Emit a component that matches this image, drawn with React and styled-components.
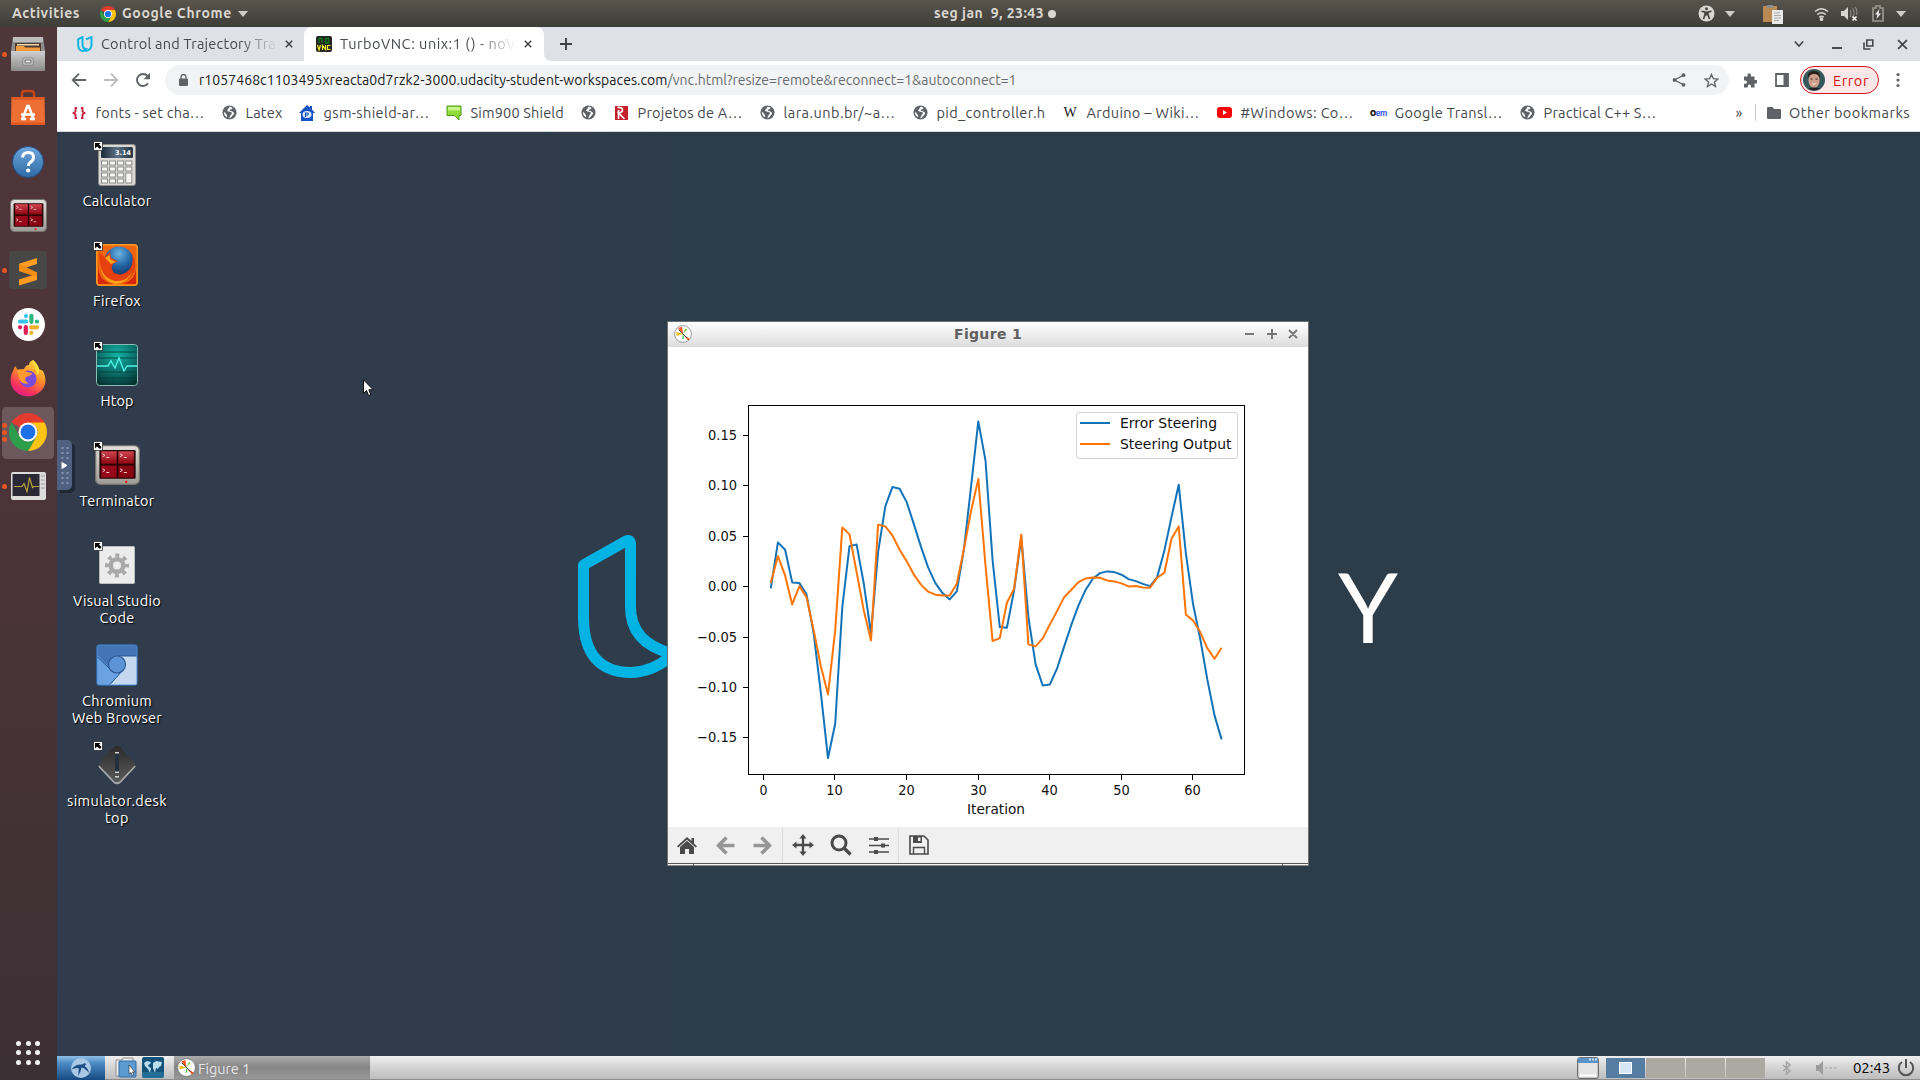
import React, { useLayoutEffect, useRef, useState } from "react";
import styled, { createGlobalStyle, css } from "styled-components";

const ui = `"Ubuntu", "Noto Sans", "Open Sans", sans-serif`;

const Global = createGlobalStyle`
  * { box-sizing: border-box; }
  html, body { margin: 0; padding: 0; background: #2d3b49; overflow: hidden; }
  body { font-family: ${ui}; }
  svg { display: block; flex: none; }
`;

/* ---------- text that keeps a fixed advance width ---------- */
const FitBox = styled.span`
  display: block;
  flex: none;
  white-space: pre;
  width: ${(p) => p.$w}px;
`;
function Fit({ w, children, className }) {
  const ref = useRef(null);
  const [spacing, setSpacing] = useState(0);
  useLayoutEffect(() => {
    const natural = ref.current.getBoundingClientRect().width;
    setSpacing((w - natural) / String(children).length);
  }, [w, children]);
  return (
    <FitBox $w={w} className={className}>
      <span ref={ref} style={{ letterSpacing: `${spacing}px` }}>{children}</span>
    </FitBox>
  );
}

/* ---------- frame ---------- */
const Screen = styled.div`
  width: 1920px;
  height: 1080px;
  display: grid;
  grid-template-rows: 27px 1fr;
  overflow: hidden;
`;
const Body = styled.div`
  display: grid;
  grid-template-columns: 57px 1fr;
  min-height: 0;
`;
const Spacer = styled.div`
  flex: ${(p) => (p.$w ? "none" : "1")};
  width: ${(p) => (p.$w ? p.$w + "px" : "auto")};
`;

/* ---------- gnome top bar ---------- */
const TopBar = styled.header`
  display: grid;
  grid-template-columns: 934px 1fr auto;
  align-items: center;
  background: linear-gradient(#58544c, #3e3d38);
  color: #dfdbd2;
`;
const TopGroup = styled.div`
  display: flex;
  align-items: center;
  height: 27px;
  padding-left: ${(p) => p.$pl || 0}px;
  gap: ${(p) => p.$gap || 0}px;
`;
const TopText = styled(Fit)`
  font-size: 14px;
  font-weight: 700;
  line-height: 27px;
  height: 27px;
  color: #d9d6cf;
`;
const Caret = styled.i`
  border: 5px solid transparent;
  border-top: 6px solid #cfccc5;
  border-bottom: 0;
  flex: none;
`;
const TopDot = styled.i`
  width: 8px;
  height: 8px;
  border-radius: 50%;
  background: #dad7d0;
  margin-left: 4px;
`;

/* ---------- dock ---------- */
const Dock = styled.nav`
  display: flex;
  flex-direction: column;
  justify-content: space-between;
  background: linear-gradient(#4f3639, #4b3439 50%, #3b3034);
`;
const DockItem = styled.div`
  display: grid;
  grid-template-columns: 8px 40px;
  align-items: center;
  justify-items: center;
  height: 54.1px;
  background: ${(p) => (p.$active ? "rgba(255,255,255,.18)" : "none")};
  background-clip: padding-box;
  border: 1px solid transparent;
  border-width: 1px 3px 1px 2px;
  border-radius: 6px;
  margin: 0;
`;
const DockDots = styled.div`
  display: flex;
  flex-direction: column;
  gap: 2px;
  margin-left: -3px;
`;
const DockDot = styled.i`
  width: 5px;
  height: 5px;
  border-radius: 50%;
  background: #e95420;
`;
const DockIcon = styled.div`
  margin: -1px 0 0 -4px;
`;
const AppsGrid = styled.div`
  display: grid;
  grid-template-columns: repeat(3, 5px);
  gap: 4.5px;
  padding: 0 0 15.5px 16px;
`;
const AppsDot = styled.i`
  height: 5px;
  border-radius: 50%;
  background: #f4f2f2;
`;

/* ---------- browser ---------- */
const Browser = styled.main`
  display: grid;
  grid-template-rows: 34px 34px 37px 924px 24px;
  min-width: 0;
`;
const TabStrip = styled.div`
  display: flex;
  background: #dee1e6;
  align-items: center;
`;
const Tab = styled.div`
  display: flex;
  align-items: center;
  height: 34px;
  width: ${(p) => p.$w}px;
  padding-left: ${(p) => p.$pl}px;
  ${(p) =>
    p.$active &&
    css`
      background: #fff;
      border-radius: 8px 8px 0 0;
      box-shadow: 8px 17px 0 0 #fff;
      clip-path: path("M-8 34Q0 34 0 26V8Q0 0 8 0H232Q240 0 240 8V26Q240 34 248 34Z");
    `}
`;
const TabTitle = styled.div`
  width: 176px;
  margin: 0 5px 0 8px;
  font-size: 14.5px;
  line-height: 33px;
  padding-bottom: 2px;
  color: #45494d;
  -webkit-mask-image: linear-gradient(90deg, #000 ${(p) => p.$fade}px, transparent 176px);
`;
const Toolbar = styled.div`
  display: flex;
  align-items: center;
  background: #fff;
  padding: 4px 0 0 14px;
`;
const NavIcons = styled.div`
  display: flex;
  gap: 16px;
  margin-right: 14px;
`;
const Omnibox = styled.div`
  display: flex;
  align-items: center;
  width: 1564px;
  height: 30px;
  border-radius: 15px;
  background: #f1f3f4;
  padding: 0 10px;
`;
const UrlPart = styled(Fit)`
  font-size: 14px;
  line-height: 29px;
  color: ${(p) => p.$c};
`;
const UrlHost = styled(UrlPart)`
  color: #202124;
`;
const UrlPath = styled(UrlPart)`
  color: #686c70;
`;
const ErrorPill = styled.div`
  display: flex;
  align-items: center;
  gap: 8px;
  width: 79px;
  height: 28px;
  margin: 0 10px 0 9px;
  padding-left: 2px;
  border: 1px solid #d3161b;
  border-radius: 14px;
  background: #fce8e8;
`;
const ErrorText = styled(Fit)`
  font-size: 14.5px;
  line-height: 25px;
  color: #d20f0f;
`;
const Bookmarks = styled.div`
  display: flex;
  align-items: center;
  gap: 16.5px;
  padding: 0 0 1px 14px;
  background: #fff;
  border-bottom: 1px solid #d5dcdd;
`;
const Bookmark = styled.div`
  display: flex;
  align-items: center;
  gap: 8.5px;
`;
const BookText = styled(Fit)`
  font-size: 14.5px;
  line-height: 34px;
  color: #44484c;
`;
const BookIcon = styled.div`
  width: 16px;
  height: 16px;
  display: grid;
  place-items: center;
  flex: none;
`;
const WGlyph = styled.span`
  font: 400 14px "Liberation Serif", serif;
  color: #202020;
`;
const Oem = styled.span`
  font: 700 8px Inter, sans-serif;
  letter-spacing: -0.5px;
  color: #3b5bff;
  & b { color: #111; }
`;
const Divider = styled.i`
  width: 1px;
  height: 17px;
  background: #c9ccd0;
  margin: 0 2px;
`;

/* ---------- remote desktop ---------- */
const Desktop = styled.section`
  position: relative;
  overflow: hidden;
  background: linear-gradient(90deg, #303c4c 0, #303c4c 480px, #2d3c49 640px, #2c3c49 100%);
`;
const IconColumn = styled.div`
  display: grid;
  grid-auto-rows: 100px;
  width: 120px;
  height: 100%;
`;
const DeskItem = styled.div`
  display: flex;
  flex-direction: column;
  align-items: center;
  padding-top: 10px;
`;
const DeskIcon = styled.div`
  position: relative;
  width: 46px;
  height: 46px;
  display: grid;
  place-items: center;
  margin-bottom: 4px;
`;
const Shortcut = styled.div`
  position: absolute;
  left: -1px;
  top: -1px;
`;
const DeskLabel = styled(Fit)`
  font-size: 14.5px;
  line-height: 17px;
  color: #fff;
  text-shadow: 1px 1px 1px #000;
`;
const Handle = styled.div`
  position: absolute;
  left: 0;
  top: 308px;
  width: 15px;
  height: 50px;
  border-radius: 0 5px 5px 0;
  background: #4f6080;
  box-shadow: 3px 3px 0 #1f2833;
`;
const Logo = styled.div`
  position: absolute;
  left: 515px;
  top: 396px;
`;
const LogoLetter = styled.div`
  position: absolute;
  left: 1281px;
  top: 415px;
  font: 400 96px/117px Lato, sans-serif;
  color: #fff;
`;
const Pointer = styled.div`
  position: absolute;
  left: 306px;
  top: 247px;
`;

/* ---------- figure window ---------- */
const Figure = styled.div`
  position: absolute;
  left: 610px;
  top: 189px;
  width: 642px;
  height: 545px;
  border: 1px solid #6c6f73;
  border-bottom-color: #8a8a8a;
  background: #fff;
  display: grid;
  grid-template-rows: 25px 480px 36px 2px;
`;
const FigTitle = styled.div`
  display: flex;
  align-items: center;
  justify-content: space-between;
  background: linear-gradient(#fff, #dcdcdc);
  padding: 0 8px 1px 6px;
`;
const FigName = styled(Fit)`
  font: 700 14px "DejaVu Sans", sans-serif;
  color: #606060;
  margin: 0 0 1px 40px;
`;
const FigTools = styled.div`
  display: flex;
  align-items: center;
  background: #f0f0f0;
`;
const Tool = styled.div`
  display: grid;
  place-items: center;
  width: ${(p) => p.$w || 38}px;
  height: 37px;
`;
const ToolSep = styled.i`
  width: 1px;
  height: 36px;
  background: #dcdcdc;
`;
const FigGrip = styled.div`
  display: flex;
  justify-content: space-between;
  border-top: 1px solid #555;
  padding: 0 25px;
  background: #f5f5f5;
`;
const GripMark = styled.i`
  width: 1px;
  height: 2px;
  background: #555;
`;

/* ---------- remote taskbar ---------- */
const Taskbar = styled.footer`
  display: flex;
  align-items: center;
  background: linear-gradient(#efefef, #d6d6d6 45%, #bdbdbd);
  border-bottom: 1px solid #8c8c8c;
`;
const StartButton = styled.div`
  width: 48px;
  height: 24px;
  display: grid;
  place-items: center;
  background: linear-gradient(#8fbfe8, #4c8ac4 30%, #164a82);
  margin-right: 10px;
`;
const TaskButton = styled.div`
  display: flex;
  align-items: center;
  gap: 2px;
  width: 196px;
  height: 23px;
  margin-left: 10px;
  padding-left: 3px;
  background: linear-gradient(#aaa, #868686 50%, #979797);
`;
const TaskText = styled(Fit)`
  font-size: 14.5px;
  line-height: 22px;
  padding-top: 2px;
  color: #e6e6e6;
`;
const Pager = styled.div`
  display: grid;
  grid-template-columns: repeat(4, 39px);
  gap: 1px;
  margin: 0 13px 0 7px;
`;
const Workspace = styled.div`
  height: 20px;
  display: grid;
  place-items: center;
  background: ${(p) => (p.$on ? "#557ca1" : "#aca8a2")};
`;
const MiniWindow = styled.i`
  width: 13px;
  height: 12px;
  background: #d6e6f5;
  border: 1px solid #fff;
`;
const ClockText = styled(Fit)`
  font-size: 15px;
  line-height: 23px;
  color: #000;
`;

/* ---------- drawings ---------- */
const ChromeLogo = ({ s }) => (
  <svg width={s} height={s} viewBox="0 0 40 40">
    <path d="M20 20L2.7 10A20 20 0 0 1 37.3 10L37.3 10.500Z" fill="#e33b2e" />
    <path d="M37.300 10A20 20 0 0 1 20 40L28.700 25A10 10 0 0 0 20 10Z" fill="#fdc413" />
    <path d="M20 40A20 20 0 0 1 2.700 10L11.300 25A10 10 0 0 0 28.700 25Z" fill="#2d9e4b" />
    <circle cx="20" cy="20" r="10" fill="#fff" />
    <circle cx="20" cy="20" r="7.8" fill="#1c71e8" />
  </svg>
);
const Globe = () => (
  <svg width="15" height="15" viewBox="0 0 16 16">
    <circle cx="8" cy="8" r="7.500" fill="#5f6368" />
    <path d="M8 1.800c-1 1-.4 1.900-1.800 2.700-1.400.9-.6 2 .7 2.300 1.800.3 3.400.4 3.600 1.700.2 1.200-1.100 1.500-1.600 2.700-.4.900-.5 2-1.300 3 1.600-.1 2.200-1.400 3-2.300 1-1.100 2.200-1.800 2.300-3.100-.6-1.600-2-1.900-3.500-2.300-1-.3-1.600-1-.5-1.700 1.200-.5 2.200-.7 2.300-1.700C10.200 2.200 9.100 1.900 8 1.800zM2 7.500c0 2.600 1.200 4.500 3.300 5.600.4-1.200.1-2-.5-2.900C4 9.200 3.600 8 2 7.500z" fill="#fff" />
  </svg>
);
const MplIcon = ({ s }) => (
  <svg width={s} height={s} viewBox="0 0 18 18">
    <circle cx="9" cy="9" r="8.400" fill="#fff" stroke="#777" strokeWidth=".7" />
    <path d="M9 9.500L4.200 3 8 1.800z" fill="#f2541b" />
    <path d="M9 9L2.600 11 2.300 7z" fill="#eebb12" />
    <path d="M9 9L13 4.600 11.200 3.600z" fill="#79d14a" />
    <path d="M8.500 9L15.800 14 14.300 15.600z" fill="#e8501d" />
    <path d="M9 9L8 14 10 13.500z" fill="#3fbf5a" />
    <path d="M4.500 4.500L13 13" stroke="#444" strokeWidth=".9" />
  </svg>
);
const Terminator = ({ w, h }) => (
  <svg width={w} height={h} viewBox="0 0 36 32" preserveAspectRatio="none">
    <defs>
      <linearGradient id="tm" x1="0" y1="0" x2="0" y2="1"><stop offset="0" stopColor="#e2e0da" /><stop offset="1" stopColor="#9d9b95" /></linearGradient>
      <linearGradient id="tr" x1="0" y1="0" x2="0" y2="1"><stop offset="0" stopColor="#d04550" /><stop offset="1" stopColor="#8c0612" /></linearGradient>
    </defs>
    <rect x=".5" y=".5" width="35" height="31" rx="4" fill="url(#tm)" stroke="#77756f" />
    <rect x="3.500" y="4" width="29" height="23" rx="1" fill="#2a0505" />
    <path d="M5 5h12.300v10H5z" fill="url(#tr)" /><path d="M18.700 5H31v10H18.700z" fill="url(#tr)" />
    <path d="M5 16.500h12.300V26H5z" fill="#98081a" /><path d="M18.700 16.500H31V26H18.700z" fill="#870612" />
    <path d="M6 7l2 1.200L6 9.500m3 .5h2.500M20 7l2 1.200-2 1.300m3 .5h2.500M6 19l2 1.200-2 1.300m3 .5h2.500M20 19l2 1.200-2 1.300m3 .5h2.500" fill="none" stroke="#f0c8cc" strokeWidth=".8" />
    <circle cx="25" cy="29.300" r="1" fill="#f21818" />
  </svg>
);
const FilesIcon = () => (
  <svg width="36" height="36" viewBox="0 0 36 36">
    <defs><linearGradient id="fi" x1="0" y1="0" x2="0" y2="1"><stop offset="0" stopColor="#cfcfcf" /><stop offset="1" stopColor="#8b8b8b" /></linearGradient></defs>
    <path d="M3 1h30l2 14v19H1V15z" fill="#8f8f8f" /><path d="M3 1h30v5H3z" fill="#bdbdbd" />
    <path d="M5 7h26v8H5z" fill="#4b3a2e" /><path d="M7 8h22v1.500H7z" fill="#f3d7b0" /><path d="M6 10h8l1 1.500h15V15H6z" fill="#f09a3e" />
    <path d="M1 15h34v19a1 1 0 0 1-1 1H2a1 1 0 0 1-1-1z" fill="url(#fi)" />
    <rect x="13" y="22" width="10" height="7" rx="1" fill="#eee" stroke="#7d7d7d" /><rect x="15" y="24" width="6" height="3" fill="none" stroke="#555" />
  </svg>
);
const SoftwareIcon = () => (
  <svg width="36" height="37" viewBox="0 0 36 37">
    <path d="M12 11V5q0-3 3-3h6q3 0 3 3v6" fill="none" stroke="#c4441a" strokeWidth="2.500" />
    <path d="M1.500 8h33l.5 28H1z" fill="#ee6f33" /><path d="M1.500 8h33v3h-33z" fill="#d95a22" /><path d="M1 33.500h34V36H1z" fill="#de5b24" />
    <path d="M12.500 30l4.800-13h1.400l4.800 13M11 30h5M20 30h5M11 25.500h14" fill="none" stroke="#fff" strokeWidth="2.600" />
  </svg>
);
const HelpIcon = () => (
  <svg width="34" height="34" viewBox="0 0 34 34">
    <defs><linearGradient id="hp" x1="0" y1="0" x2="0" y2="1"><stop offset="0" stopColor="#6ea7dc" /><stop offset="1" stopColor="#2f6aa6" /></linearGradient></defs>
    <circle cx="17" cy="17" r="15.500" fill="url(#hp)" stroke="#1f4f85" />
    <path d="M11.500 12.500q.5-5 5.700-5 5.300 0 5.300 4.700 0 2.800-2.800 4.800-2.400 1.600-2.400 4" fill="none" stroke="#fff" strokeWidth="3" />
    <circle cx="17.200" cy="25.500" r="2.100" fill="#fff" />
  </svg>
);
const SublimeIcon = () => (
  <svg width="38" height="38" viewBox="0 0 38 38">
    <rect width="38" height="38" rx="3" fill="#474747" />
    <path d="M28 7L10 12.700V20l14 4-14 4.500v6L28 29v-7.500L14 17.500l14-4.400z" fill="#ff9b20" />
    <path d="M10 12.700V20l18 6v-4.500z" fill="#f28f12" />
  </svg>
);
const SlackIcon = () => (
  <svg width="33" height="33" viewBox="0 0 33 33">
    <circle cx="16.500" cy="16.500" r="16.500" fill="#fff" />
    <g strokeWidth="4.200" strokeLinecap="round">
      <path d="M8 13.500h6.200M14 8v.1" stroke="#36c5f0" />
      <path d="M19.400 7.800v6M25 13.600h-.1" stroke="#2eb67d" />
      <path d="M25 19.300h-6M19.300 24.900v-.1" stroke="#ecb22e" />
      <path d="M13.800 25v-6M8 19.300h.1" stroke="#e01e5a" />
    </g>
  </svg>
);
const FirefoxIcon = () => (
  <svg width="38" height="38" viewBox="0 0 38 38">
    <defs>
      <linearGradient id="ff" x1=".8" y1="0" x2=".3" y2="1"><stop offset="0" stopColor="#ffe23b" /><stop offset=".45" stopColor="#ff8a2a" /><stop offset=".8" stopColor="#f5315f" /><stop offset="1" stopColor="#e01f8b" /></linearGradient>
    </defs>
    <path d="M24 1c3 3 5 5 6 9l4 2c4 8 3 15-2 20-7 7-18 7-25 1C1 28 0 19 4 12L6 7l3 4 6-1c1-2 2-4 5-4 0-2 1-4 4-5z" fill="url(#ff)" />
    <circle cx="19" cy="20" r="8.500" fill="#7b4bdc" />
    <path d="M8 11c5-2 8 0 10 2l5 1c0 3-4 3-6 4-2 2 0 6 3 6-5 2-9-1-10-5z" fill="#ff9a2e" />
    <path d="M24 1c-1 5 4 8 4 15 3-2 2-5 2-6-1-4-3-6-6-9z" fill="#ffdf3a" />
  </svg>
);
const MonitorIcon = () => (
  <svg width="35" height="28" viewBox="0 0 35 28">
    <rect width="35" height="28" rx="2" fill="#dcdcdc" /><path d="M1.500 2h27v22h-27z" fill="#2b2836" />
    <path d="M3 14.500h8l2-3 3 8 2.500-14 3 10 1.500-1h5" fill="none" stroke="#b9a53a" strokeWidth="1.200" />
    <path d="M30.500 4h3M30.500 8h3M30.500 12h3M30.500 16h3" stroke="#8b8b8b" strokeDasharray="1 1" strokeWidth="1.500" />
  </svg>
);
const UdacityMark = () => (
  <svg width="16" height="16" viewBox="0 0 16 16" fill="none" stroke="#02b3e4" strokeWidth="1.900">
    <path d="M1.200 3.300L5.500 1v7.500q0 4 3.500 4.500Q7 15 5.500 15 1.200 14 1.200 9z" />
    <path d="M9 3.300L14.500 1v8.500q-.5 5-6.500 5.500" />
  </svg>
);
const Close = ({ s = 8, c = "#3c4043", w = 1.8 }) => (
  <svg width={s} height={s} viewBox="0 0 10 10"><path d="M1 1l8 8M9 1L1 9" stroke={c} strokeWidth={w} /></svg>
);
const Calculator = () => (
  <svg width="38" height="42" viewBox="0 0 38 42">
    <defs><linearGradient id="lcd"><stop offset="0" stopColor="#1c2b3a" /><stop offset=".5" stopColor="#5c6f82" /><stop offset="1" stopColor="#22323f" /></linearGradient></defs>
    <rect x=".5" y=".5" width="37" height="41" rx="2.500" fill="#d9d8d5" stroke="#8f8e8b" />
    <rect x="3" y="3" width="32" height="11" rx="1.500" fill="url(#lcd)" />
    <text x="33" y="11" textAnchor="end" fontSize="6.500" fontWeight="700" fontFamily="DejaVu Sans, sans-serif" fill="#fff">3.14</text>
    {[0, 1, 2, 3].map((r) => [0, 1, 2, 3].map((c) => (r === 3 && c === 3) ? null : (
      <rect key={`${r}${c}`} x={3.500 + c * 8.100} y={17 + r * 6} width="6" height={r === 2 && c === 3 ? 10 : 4} fill="#f7f7f6" stroke="#777" strokeWidth=".8" />
    )))}
  </svg>
);
const OldFirefox = () => (
  <svg width="42" height="42" viewBox="0 0 42 42">
    <defs><radialGradient id="gl" cx=".5" cy=".25" r=".8"><stop offset="0" stopColor="#6db4e2" /><stop offset=".5" stopColor="#2468a8" /><stop offset="1" stopColor="#14305e" /></radialGradient></defs>
    <rect x=".7" y=".7" width="40.600" height="40.600" rx="3" fill="#f0650f" stroke="#ff9a1c" strokeWidth="1.400" />
    <path d="M2 20Q2 38 18 40H2zM40 18q2 18-14 22h14z" fill="#d5280c" />
    <circle cx="23" cy="17" r="14.500" fill="url(#gl)" />
    <path d="M3 9l6 4 5-5 1 6 7 3-5 3q-3 4 1 9 8 4 15-3 5-6 3-16 6 10 1 20-7 10-19 8Q4 34 3 9z" fill="#e6400e" />
    <path d="M4 20q2 14 15 17 12 1 18-10-5 12-17 13Q6 38 4 20zM9 14l5-3v4l6 3-5 2z" fill="#fba41d" />
  </svg>
);
const Htop = () => (
  <svg width="42" height="42" viewBox="0 0 42 42">
    <defs><radialGradient id="ht" cx=".5" cy=".25" r=".8"><stop offset="0" stopColor="#12b3a4" /><stop offset=".6" stopColor="#0b6a66" /><stop offset="1" stopColor="#063532" /></radialGradient></defs>
    <rect x=".5" y=".5" width="41" height="41" rx="3" fill="url(#ht)" stroke="#86bdb4" />
    <path d="M1 8h40M1 14h40M1 28h40M1 34h40" stroke="#06403c" strokeWidth="1.500" opacity=".6" />
    <path d="M1 22h11l3-5 4 7 4-10 5 13 3-5h10" fill="none" stroke="#4ff3e6" strokeWidth="1.400" />
  </svg>
);
const GearFile = () => (
  <svg width="36" height="38" viewBox="0 0 36 38">
    <rect x=".5" y=".5" width="35" height="37" rx="1" fill="#ececec" stroke="#bdbdbd" />
    <circle cx="18" cy="19.500" r="6.300" fill="none" stroke="#a9a9a9" strokeWidth="4.600" />
    <circle cx="18" cy="19.500" r="10" fill="none" stroke="#a9a9a9" strokeWidth="4" strokeDasharray="3.900 3.954" strokeDashoffset="1.950" />
  </svg>
);
const Chromium = () => (
  <svg width="42" height="42" viewBox="0 0 42 42">
    <rect x=".7" y=".7" width="40.600" height="40.600" rx="2.500" fill="#5a96da" stroke="#2e69a8" />
    <path d="M1.500 1.500h39V12H21L13 23 1.500 11z" fill="#4474b4" />
    <path d="M21 12h19.500v28.500H14L27 26z" fill="#c3d8ee" /><path d="M1.500 13L13 24q6 6 14 2L14 40.500H1.500z" fill="#6aa2e2" />
    <path d="M1.500 13L14 25M27 26L14 40.500M21 12h19.500" fill="none" stroke="#2b5791" strokeWidth="1" />
    <circle cx="21" cy="20.500" r="8.500" fill="#5d94d8" stroke="#2b5791" strokeWidth="1.200" />
  </svg>
);
const Simulator = () => (
  <svg width="38" height="40" viewBox="0 0 38 40">
    <defs><linearGradient id="sm" x1="0" y1="0" x2="0" y2="1"><stop offset="0" stopColor="#2b2b2c" /><stop offset="1" stopColor="#5a5a5b" /></linearGradient></defs>
    <path d="M1 21L16 37q3 2.500 6 0L37 21" fill="none" stroke="#a9a9a9" strokeWidth="2" />
    <path d="M19 1q2 0 3 1l14 15q2 2 0 4L22 36q-3 2-6 0L2 21q-2-2 0-4L16 2q1-1 3-1z" fill="url(#sm)" />
    <path d="M17 7h4v21h-4z" fill="#233040" /><path d="M17 7h4v1.500h-4zM17 26.500h4V28h-4zM17 31h4v1.500h-4z" fill="#cfcfcf" />
  </svg>
);
const ShortcutArrow = () => (
  <svg width="10" height="10" viewBox="0 0 10 10"><path d="M.5.500h9v9h-9z" fill="#fff" stroke="#000" strokeWidth=".6" /><path d="M2 2h5.500L6 3.500 8.500 6 7 8 4 5.500 2 7.500z" fill="#000" /></svg>
);

/* ---------- data ---------- */
const ERROR_PX = [588, 542, 549.3, 582, 582.7, 594, 633, 693, 757.7, 723.3, 606.7, 545.7, 544, 583.3, 633, 551.7, 506, 486.7, 488.3, 501.7, 524, 546.7, 567.3, 582.7, 592.7, 599, 591, 548.3, 485, 421, 460, 560, 626.7, 627.3, 590, 537, 616.7, 664, 685, 684, 668.3, 646, 624.3, 605, 589.3, 578.3, 572.7, 571, 571.7, 574.3, 578.7, 580.7, 583.5, 585.7, 576.7, 550, 516.7, 484.3, 553.3, 603.3, 638.3, 679, 715, 739];
const OUTPUT_PX = [582.5, 555.7, 575, 604, 585.7, 596.7, 630, 666, 694, 630, 527, 534, 571.7, 610, 640, 524.3, 526, 535, 549.3, 560.7, 574.3, 584.5, 591.3, 594.3, 595, 595, 583.3, 548.3, 510, 478.7, 565, 640.7, 637.7, 602.3, 588.3, 534, 644, 646, 638, 624, 610.7, 596.7, 589.3, 581.7, 578, 577, 577.3, 580, 581, 583, 586, 585.7, 587, 587.3, 577.3, 572.3, 538.3, 526, 614.3, 620, 631.7, 647.7, 658.3, 647.3];
const toPoints = (arr) => arr.map((y, i) => `${(95.600 + 7.157 * (i + 1)).toFixed(1)},${(y - 346.6).toFixed(1)}`).join(" ");
const plotFont = { fontFamily: "DejaVu Sans, sans-serif", fontSize: 13.9, fill: "#111" };

function Plot() {
  return (
    <svg width="640" height="480" viewBox="0 0 640 480">
      <g fill="none" strokeWidth="2" strokeLinejoin="round">
        <polyline points={toPoints(ERROR_PX)} stroke="#1273b8" />
        <polyline points={toPoints(OUTPUT_PX)} stroke="#ff7405" />
      </g>
      <rect x="80.500" y="58.500" width="496" height="369" fill="none" stroke="#000" />
      {[0.15, 0.1, 0.05, 0, -0.05, -0.1, -0.15].map((v) => {
        const y = Math.round(239.200 - v * 1008) + 0.5;
        return (
          <g key={v}>
            <path d={`M75 ${y}h5`} stroke="#000" />
            <text x="69" y={y + 4.5} textAnchor="end" textLength={v < 0 ? 40 : 29} lengthAdjust="spacingAndGlyphs" {...plotFont}>{(v < 0 ? "−" : "") + Math.abs(v).toFixed(2)}</text>
          </g>
        );
      })}
      {[0, 10, 20, 30, 40, 50, 60].map((v) => {
        const x = Math.floor(95.300 + v * 7.157) + 0.5;
        return (
          <g key={v}>
            <path d={`M${x} 428v5`} stroke="#000" />
            <text x={x} y="448" textAnchor="middle" textLength={v ? 16.500 : 8} lengthAdjust="spacingAndGlyphs" {...plotFont}>{v}</text>
          </g>
        );
      })}
      <text x="328" y="466.500" textAnchor="middle" textLength="58" lengthAdjust="spacingAndGlyphs" {...plotFont}>Iteration</text>
      <rect x="408.500" y="65.500" width="161" height="46" rx="2.500" fill="#fff" stroke="#d2d2d2" />
      <path d="M412 76h30" stroke="#1273b8" strokeWidth="2" /><path d="M412 97h30" stroke="#ff7405" strokeWidth="2" />
      <text x="452" y="81" textLength="97" lengthAdjust="spacingAndGlyphs" {...plotFont}>Error Steering</text>
      <text x="452" y="102" textLength="111.500" lengthAdjust="spacingAndGlyphs" {...plotFont}>Steering Output</text>
    </svg>
  );
}

const bookmarks = [
  { icon: "braces", text: "fonts - set cha…", w: 109 },
  { icon: "globe", text: "Latex", w: 37 },
  { icon: "home", text: "gsm-shield-ar…", w: 106 },
  { icon: "chat", text: "Sim900 Shield", w: 93.5 },
  { icon: "globe" },
  { icon: "r", text: "Projetos de A…", w: 105 },
  { icon: "globe", text: "lara.unb.br/~a…", w: 112 },
  { icon: "globe", text: "pid_controller.h", w: 109 },
  { icon: "w", text: "Arduino – Wiki…", w: 113 },
  { icon: "yt", text: "#Windows: Co…", w: 113 },
  { icon: "oem", text: "Google Transl…", w: 108 },
  { icon: "globe", text: "Practical C++ S…", w: 113 },
];
function Favicon({ kind }) {
  if (kind === "globe") return <Globe />;
  if (kind === "w") return <WGlyph>W</WGlyph>;
  if (kind === "oem") return <Oem><b>O</b>em</Oem>;
  if (kind === "braces")
    return <svg width="14" height="12" viewBox="0 0 14 12"><path d="M5 1H3.500v3.500L1.500 6l2 1.500V11H5M9 1h1.500v3.500l2 1.500-2 1.500V11H9" fill="none" stroke="#c8203f" strokeWidth="1.800" /></svg>;
  if (kind === "home")
    return <svg width="16" height="16" viewBox="0 0 16 16"><path d="M8 0l3 2.500V1h2v3.500L16 8h-2v8H2V8H0z" fill="#1453c4" /><ellipse cx="8" cy="9.500" rx="4.500" ry="3.500" fill="#dce8fb" /><path d="M6.500 12V8h2q1.500 1 0 2h-2" fill="none" stroke="#1453c4" strokeWidth="1.200" /></svg>;
  if (kind === "chat")
    return <svg width="16" height="16" viewBox="0 0 16 16"><path d="M1 1h14v9.500h-2V15l-4.500-4.500H1z" fill="#8fdc3a" stroke="#4f9c1c" /><path d="M2 2h12v3.500H2z" fill="#c9f58c" /></svg>;
  if (kind === "r")
    return <svg width="13" height="14" viewBox="0 0 13 14"><path d="M0 0h13v14H0z" fill="#c4212b" /><path d="M2.500 1.500q5-.5 5 2.500 0 2.500-4 3l6 6M3.500 4v9" fill="none" stroke="#fff" strokeWidth="1.700" /></svg>;
  return <svg width="15" height="11" viewBox="0 0 15 11"><rect width="15" height="11" rx="3" fill="#f00" /><path d="M6 3l4 2.500L6 8z" fill="#fff" /></svg>;
}

const desktopItems = [
  { icon: <Calculator />, lines: [["Calculator", 69]], link: true },
  { icon: <OldFirefox />, lines: [["Firefox", 48]], link: true },
  { icon: <Htop />, lines: [["Htop", 33]], link: true },
  { icon: <Terminator w={45} h={40} />, lines: [["Terminator", 75]], link: true },
  { icon: <GearFile />, lines: [["Visual Studio", 88], ["Code", 35]], link: true },
  { icon: <Chromium />, lines: [["Chromium", 70], ["Web Browser", 90]] },
  { icon: <Simulator />, lines: [["simulator.desk", 100], ["top", 24]], link: true },
];

const dockItems = [
  { icon: <FilesIcon />, dots: 1 },
  { icon: <SoftwareIcon /> },
  { icon: <HelpIcon /> },
  { icon: <Terminator w={37} h={33} /> },
  { icon: <SublimeIcon />, dots: 1 },
  { icon: <SlackIcon /> },
  { icon: <FirefoxIcon /> },
  { icon: <ChromeLogo s={38} />, dots: 3, active: true },
  { icon: <MonitorIcon />, dots: 1 },
];

const g = "#5f6368";
const tool = "#4a4a4a";

export default function App() {
  return (
    <Screen>
      <Global />
      <TopBar>
        <TopGroup $pl={12}>
          <TopText w={68}>Activities</TopText>
          <Spacer $w={20} />
          <ChromeLogo s={16} />
          <Spacer $w={6} />
          <TopText w={110}>Google Chrome</TopText>
          <Spacer $w={6} />
          <Caret />
        </TopGroup>
        <TopGroup>
          <TopText w={110}>seg jan  9, 23:43</TopText>
          <TopDot />
        </TopGroup>
        <TopGroup>
          <svg width="17" height="17" viewBox="0 0 17 17"><circle cx="8.500" cy="8.500" r="8" fill="#d9d6cf" /><circle cx="8.500" cy="3.800" r="1.500" fill="#45433e" /><path d="M3.500 6.200l3.500.8v2.500L5.500 14M13.500 6.200L10 7v2.500l1.500 4.500M8.500 6.500v4" fill="none" stroke="#45433e" strokeWidth="1.600" /></svg>
          <Spacer $w={10} />
          <Caret />
          <Spacer $w={28} />
          <svg width="21" height="20" viewBox="0 0 21 20"><path d="M0 2h14v16H0z" fill="#b98a54" /><path d="M4 1h6v3H4z" fill="#8d8d8d" /><path d="M9 6h11v14H9z" fill="#e9e9e9" /><path d="M11 9h6M11 11.500h7M11 14h7M11 16.500h5" stroke="#aaa" /></svg>
          <Spacer $w={30} />
          <svg width="15" height="14" viewBox="0 0 15 14" fill="none" stroke="#d9d6cf" strokeWidth="1.600"><path d="M1 4.500Q7.500-1 14 4.500M3.200 7.500q4.300-3.500 8.600 0M5.300 10.300q2.200-1.800 4.400 0" /><circle cx="7.500" cy="12.300" r="1" fill="#d9d6cf" /></svg>
          <Spacer $w={12} />
          <svg width="18" height="16" viewBox="0 0 18 16"><path d="M0 5h3l4-4v13L3 10H0z" fill="#d9d6cf" /><path d="M9 4q2 3 0 7M11.500 2q3.500 5 0 9M14 1q3 4 1.500 8" fill="none" stroke="#8c8982" strokeWidth="1.200" /><path d="M11.500 10.500l4 4m0-4l-4 4" stroke="#fff" strokeWidth="1.600" /></svg>
          <Spacer $w={13} />
          <svg width="12" height="17" viewBox="0 0 12 17"><path d="M1 3h3V1h4v2h3v13H1z" fill="none" stroke="#9c9991" strokeWidth="1.600" /><path d="M7.500 4L3 9.500h2.500L4.500 14 9 8.500H6.500z" fill="#eee" /></svg>
          <Spacer $w={12} />
          <Caret />
          <Spacer $w={14} />
        </TopGroup>
      </TopBar>
      <Body>
        <Dock>
          <div>
            {dockItems.map((d, i) => (
              <DockItem key={i} $active={d.active}>
                <DockDots>{Array.from({ length: d.dots || 0 }, (_, k) => <DockDot key={k} />)}</DockDots>
                <DockIcon>{d.icon}</DockIcon>
              </DockItem>
            ))}
          </div>
          <AppsGrid>{Array.from({ length: 9 }, (_, k) => <AppsDot key={k} />)}</AppsGrid>
        </Dock>
        <Browser>
          <TabStrip>
            <Tab $w={247} $pl={20}>
              <UdacityMark />
              <TabTitle $fade={140}><Fit w={175}>Control and Trajectory Tra</Fit></TabTitle>
              <Spacer $w={3} /><Close />
            </Tab>
            <Tab $w={240} $pl={12} $active>
              <svg width="16" height="16" viewBox="0 0 16 16"><rect width="16" height="16" rx="2" fill="#262626" /><path d="M3 7V2.500h3V7M9.500 2.500h3V7h-3z" fill="none" stroke="#0a7a12" strokeWidth="1.300" /><path d="M1.500 9l1.500 5L4.500 9M6.500 14V9.500l3 4V9M14.500 9.500h-3v4h3" fill="none" stroke="#f1f12a" strokeWidth="1.200" /></svg>
              <TabTitle $fade={135}><Fit w={176}>TurboVNC: unix:1 () - noV</Fit></TabTitle>
              <Spacer $w={3} /><Close />
            </Tab>
            <Spacer $w={16} />
            <svg width="12" height="12" viewBox="0 0 12 12"><path d="M6 0v12M0 6h12" stroke="#3c4043" strokeWidth="1.900" /></svg>
            <Spacer />
            <svg width="10" height="8" viewBox="0 0 10 8"><path d="M.8 1.500L5 6l4.200-4.500" fill="none" stroke="#45494d" strokeWidth="1.700" /></svg>
            <Spacer $w={28} />
            <svg width="10" height="10" viewBox="0 0 10 10"><path d="M0 9h10" stroke="#45494d" strokeWidth="2" /></svg>
            <Spacer $w={21} />
            <svg width="11" height="11" viewBox="0 0 11 11" fill="none" stroke="#45494d" strokeWidth="1.600"><path d="M3.800 1h6v6h-6zM1 3.500V10h6.500" /></svg>
            <Spacer $w={23} />
            <Close s={11} c="#45494d" w={1.6} />
            <Spacer $w={12} />
          </TabStrip>
          <Toolbar>
            <NavIcons>
              <svg width="16" height="16" viewBox="0 0 16 16" fill="none" stroke={g} strokeWidth="1.800"><path d="M15 8H2M8 1.700L1.700 8 8 14.300" /></svg>
              <svg width="16" height="16" viewBox="0 0 16 16" fill="none" stroke="#bbbdc0" strokeWidth="1.800"><path d="M1 8h13M8 1.700L14.300 8 8 14.300" /></svg>
              <svg width="16" height="16" viewBox="0 0 16 16"><path d="M13 11.300A6 6 0 1 1 12.500 4" fill="none" stroke={g} strokeWidth="1.900" /><path d="M15 .8v6.400H8.600z" fill={g} /></svg>
            </NavIcons>
            <Omnibox>
              <Spacer $w={4} />
              <svg width="9" height="12" viewBox="0 0 9 12"><rect y="4.500" width="9" height="7.500" rx="1" fill={g} /><path d="M2 5V3a2.500 2.500 0 0 1 5 0v2" fill="none" stroke={g} strokeWidth="1.300" /></svg>
              <Spacer $w={11} />
              <UrlHost w={468.5}>r1057468c1103495xreacta0d7rzk2-3000.udacity-student-workspaces.com</UrlHost>
              <UrlPath w={349}>/vnc.html?resize=remote&reconnect=1&autoconnect=1</UrlPath>
              <Spacer />
              <svg width="14" height="14" viewBox="0 0 14 14"><path d="M12 2L2.500 7 12 12" fill="none" stroke={g} strokeWidth="1.400" /><circle cx="11.500" cy="2.200" r="1.900" fill={g} /><circle cx="2.500" cy="7" r="1.900" fill={g} /><circle cx="11.500" cy="11.800" r="1.900" fill={g} /></svg>
              <Spacer $w={18} />
              <svg width="15" height="15" viewBox="0 0 16 16"><path d="M8 1.500l2 4.500 4.800.4-3.700 3.200 1.200 4.800L8 11.800l-4.300 2.600 1.200-4.800L1.200 6.400 6 6z" fill="none" stroke={g} strokeWidth="1.400" /></svg>
            </Omnibox>
            <Spacer $w={14} />
            <svg width="14" height="15" viewBox="0 0 14 15"><path d="M1 3.500h3.500V2a1.700 1.700 0 0 1 3.400 0v1.500h3.600V7H13a1.700 1.700 0 0 1 0 3.400h-1.500V14.500H8V13a1.600 1.600 0 0 0-3.200 0v1.500H1v-3.700h1.300a1.600 1.600 0 0 0 0-3.300H1z" fill={g} /></svg>
            <Spacer $w={18} />
            <svg width="14" height="14" viewBox="0 0 14 14"><path d="M1 1h12v12H1z" fill="none" stroke={g} strokeWidth="1.800" /><path d="M8.500 1H13v12H8.500z" fill={g} /></svg>
            <Spacer $w={2} />
            <ErrorPill>
              <svg width="22" height="22" viewBox="0 0 22 22"><circle cx="11" cy="11" r="11" fill="#35585c" /><ellipse cx="11" cy="11.500" rx="5.500" ry="7.500" fill="#cf9f8c" /><path d="M5 9Q4 2 11 2t6 7q-1-4-6-4T5 9z" fill="#2a1f1b" /><path d="M7.500 10h2M12.500 10h2" stroke="#3a2420" strokeWidth="1" /><path d="M8.500 14q2.500 1.500 5 0-2.500 3-5 0z" fill="#fff" /><path d="M5 19.500q6-2 12 0Q11 23 5 19.500z" fill="#222" /></svg>
              <ErrorText w={36}>Error</ErrorText>
            </ErrorPill>
            <Spacer $w={7} />
            <svg width="4" height="16" viewBox="0 0 4 16" fill={g}><circle cx="2" cy="2.500" r="1.600" /><circle cx="2" cy="8" r="1.600" /><circle cx="2" cy="13.500" r="1.600" /></svg>
          </Toolbar>
          <Bookmarks>
            {bookmarks.map((b, i) => (
              <Bookmark key={i}>
                <BookIcon><Favicon kind={b.icon} /></BookIcon>
                {b.text && <BookText w={b.w}>{b.text}</BookText>}
              </Bookmark>
            ))}
            <Spacer />
            <Bookmark>
              <BookText w={9}>»</BookText>
              <Divider />
              <svg width="14" height="12" viewBox="0 0 14 12"><path d="M0 1q0-1 1-1h4.500L7 2h6q1 0 1 1v8q0 1-1 1H1q-1 0-1-1z" fill={g} /></svg>
              <BookText w={121}>Other bookmarks</BookText>
              <Spacer $w={1.5} />
            </Bookmark>
          </Bookmarks>
          <Desktop>
            <IconColumn>
              {desktopItems.map((d, i) => (
                <DeskItem key={i}>
                  <DeskIcon>{d.icon}{d.link && <Shortcut><ShortcutArrow /></Shortcut>}</DeskIcon>
                  {d.lines.map(([t, w]) => <DeskLabel key={t} w={w}>{t}</DeskLabel>)}
                </DeskItem>
              ))}
            </IconColumn>
            <Handle>
              <svg width="15" height="50" viewBox="0 0 15 50"><path d="M5.500 7v14M10.500 7v14M5.500 32v14M10.500 32v14" stroke="#8794ab" strokeWidth="2" strokeDasharray="2 3" /><path d="M5 22.500l5 3-5 3z" fill="#fff" stroke="#fff" /></svg>
            </Handle>
            <Logo>
              <svg width="100" height="155" viewBox="0 0 100 155" fill="none" stroke="#02b3e4" strokeWidth="11" strokeLinejoin="round">
                <path d="M98 125Q58 114 58.500 78V16q0-5-4.500-3L11.500 37V90Q12 144 59 144.500 80 144 98 129" />
              </svg>
            </Logo>
            <LogoLetter>Y</LogoLetter>
            <Pointer>
              <svg width="12" height="18" viewBox="0 0 12 18"><path d="M.5.800v13.500l3-2.800 2 5 2.300-1-2-4.700h4.400z" fill="#fff" stroke="#111" /></svg>
            </Pointer>
            <Figure>
              <FigTitle>
                <MplIcon s={18} />
                <FigName w={68}>Figure 1</FigName>
                <svg width="56" height="14" viewBox="0 0 56 14" fill="none" stroke="#777" strokeWidth="2"><path d="M1 7h9M23 7h10M28 2v10M45 3l8 8M53 3l-8 8" /></svg>
              </FigTitle>
              <Plot />
              <FigTools>
                <Tool>
                  <svg width="20" height="17" viewBox="0 0 20 17"><path d="M10 0l4.500 4V1H17v5.500l3 2.700-1.200 1.300L10 2.700 1.200 10.500 0 9.200z" fill={tool} /><path d="M3 10l7-6.200L17 10v7h-5v-5H8v5H3z" fill={tool} /></svg>
                </Tool>
                <Tool>
                  <svg width="19" height="19" viewBox="0 0 19 19" fill="none" stroke="#969696" strokeWidth="3.600"><path d="M18.500 9.500H3M10.500 1.500l-8 8 8 8" /></svg>
                </Tool>
                <Tool $w={37}>
                  <svg width="19" height="19" viewBox="0 0 19 19" fill="none" stroke="#969696" strokeWidth="3.600"><path d="M.5 9.500H16M8.500 1.500l8 8-8 8" /></svg>
                </Tool>
                <Spacer $w={1} />
                <ToolSep />
                <Tool $w={40}>
                  <svg width="22" height="22" viewBox="0 0 22 22"><path d="M11 3v16M3 11h16" stroke={tool} strokeWidth="2.300" /><path d="M11 0l3.600 4.500H7.400zM11 22l3.600-4.500H7.400zM0 11l4.500-3.600v7.200zM22 11l-4.500-3.600v7.200z" fill={tool} /></svg>
                </Tool>
                <Tool $w={36}>
                  <svg width="22" height="22" viewBox="0 0 22 22" fill="none" stroke={tool}><circle cx="9" cy="9" r="7" strokeWidth="3" /><path d="M14 14l6.500 6.500" strokeWidth="3.400" /></svg>
                </Tool>
                <Tool $w={39}>
                  <svg width="20" height="18" viewBox="0 0 20 18"><path d="M0 3h20M0 9.500h20M0 16h20" stroke={tool} strokeWidth="1.500" /><path d="M5 1h4v4H5zM12 7.500h4v4h-4zM5 14h4v4H5z" fill={tool} /></svg>
                </Tool>
                <ToolSep />
                <Tool $w={40}>
                  <svg width="20" height="20" viewBox="0 0 20 20"><path d="M1 1h14l4 4v14H1z" fill="none" stroke={tool} strokeWidth="1.600" /><path d="M4 1h9v7H4z" fill={tool} /><path d="M9 2.500h2.500V6H9z" fill="#f0f0f0" /><path d="M4.500 19v-6.500h11V19" fill="none" stroke={tool} strokeWidth="1.400" /></svg>
                </Tool>
              </FigTools>
              <FigGrip><GripMark /><GripMark /></FigGrip>
            </Figure>
          </Desktop>
          <Taskbar>
            <StartButton>
              <svg width="22" height="22" viewBox="0 0 22 22"><circle cx="11" cy="11" r="10" fill="#a9c8e4" /><path d="M1.500 12.500Q5 7 12 7.500l3-1.500 1 1.500-1.500 1.500q4 2.500 4.500 7-4-5-7.500-5.500Q11 15 8 19q1-5 .5-8Q5 10.500 1.500 12.500z" fill="#1d4f86" /></svg>
            </StartButton>
            <svg width="22" height="21" viewBox="0 0 22 21"><path d="M1 3h6l1-2h10v18H1z" fill="#eee" stroke="#8d8d8d" /><rect x="4" y="4" width="17" height="16" rx="1" fill="#5b9bd2" stroke="#2f6ba5" /><path d="M14 8v9l2-1.500 1.300 3 1.400-.6-1.200-3H20z" fill="#fff" stroke="#333" strokeWidth=".7" /></svg>
            <Spacer $w={5} />
            <svg width="22" height="21" viewBox="0 0 22 21"><rect width="22" height="21" rx="2" fill="#15527a" /><path d="M2 6l3-2 4 1-1 2-2 1 1 2 2 1-1 5-2-4-3-3zM11 6l3-2 6 1-1 4-2 1-1 2-2-1-1 5-2-5z" fill="#b9dfee" /><path d="M0 15h22v4q0 2-2 2H2q-2 0-2-2z" fill="#2f86b0" opacity=".5" /></svg>
            <TaskButton><MplIcon s={19} /><TaskText w={52}>Figure 1</TaskText></TaskButton>
            <Spacer />
            <svg width="22" height="22" viewBox="0 0 22 22"><rect x=".7" y=".7" width="20.600" height="20.600" rx="2" fill="#e4e4e4" stroke="#555" /><path d="M1 1h20v5H1z" fill="#5b93c8" /><path d="M12 2.500h8" stroke="#cfe2f3" strokeDasharray="2 1" strokeWidth="2" /><path d="M3 18.500h16" stroke="#fff" strokeWidth="2" /></svg>
            <Pager>
              <Workspace $on><MiniWindow /></Workspace>
              <Workspace /><Workspace /><Workspace />
            </Pager>
            <Spacer $w={4} />
            <svg width="9" height="14" viewBox="0 0 9 14"><path d="M1 4l7 6-3.500 3V1L8 4l-7 6" fill="none" stroke="#a5a5a5" strokeWidth="1.500" /></svg>
            <Spacer $w={25} />
            <svg width="22" height="14" viewBox="0 0 22 14"><path d="M0 4h3l4-4v14l-4-4H0z" fill="#9b9b9b" /><path d="M9 7h12" stroke="#b0b0b0" strokeWidth="1.500" strokeDasharray="2.500 2" /></svg>
            <Spacer $w={15} />
            <ClockText w={37}>02:43</ClockText>
            <Spacer $w={7} />
            <svg width="18" height="18" viewBox="0 0 18 18" fill="none" stroke="#555" strokeWidth="2"><path d="M5 3a7.200 7.200 0 1 0 8 0M9 0v9" /></svg>
            <Spacer $w={5} />
          </Taskbar>
        </Browser>
      </Body>
    </Screen>
  );
}
